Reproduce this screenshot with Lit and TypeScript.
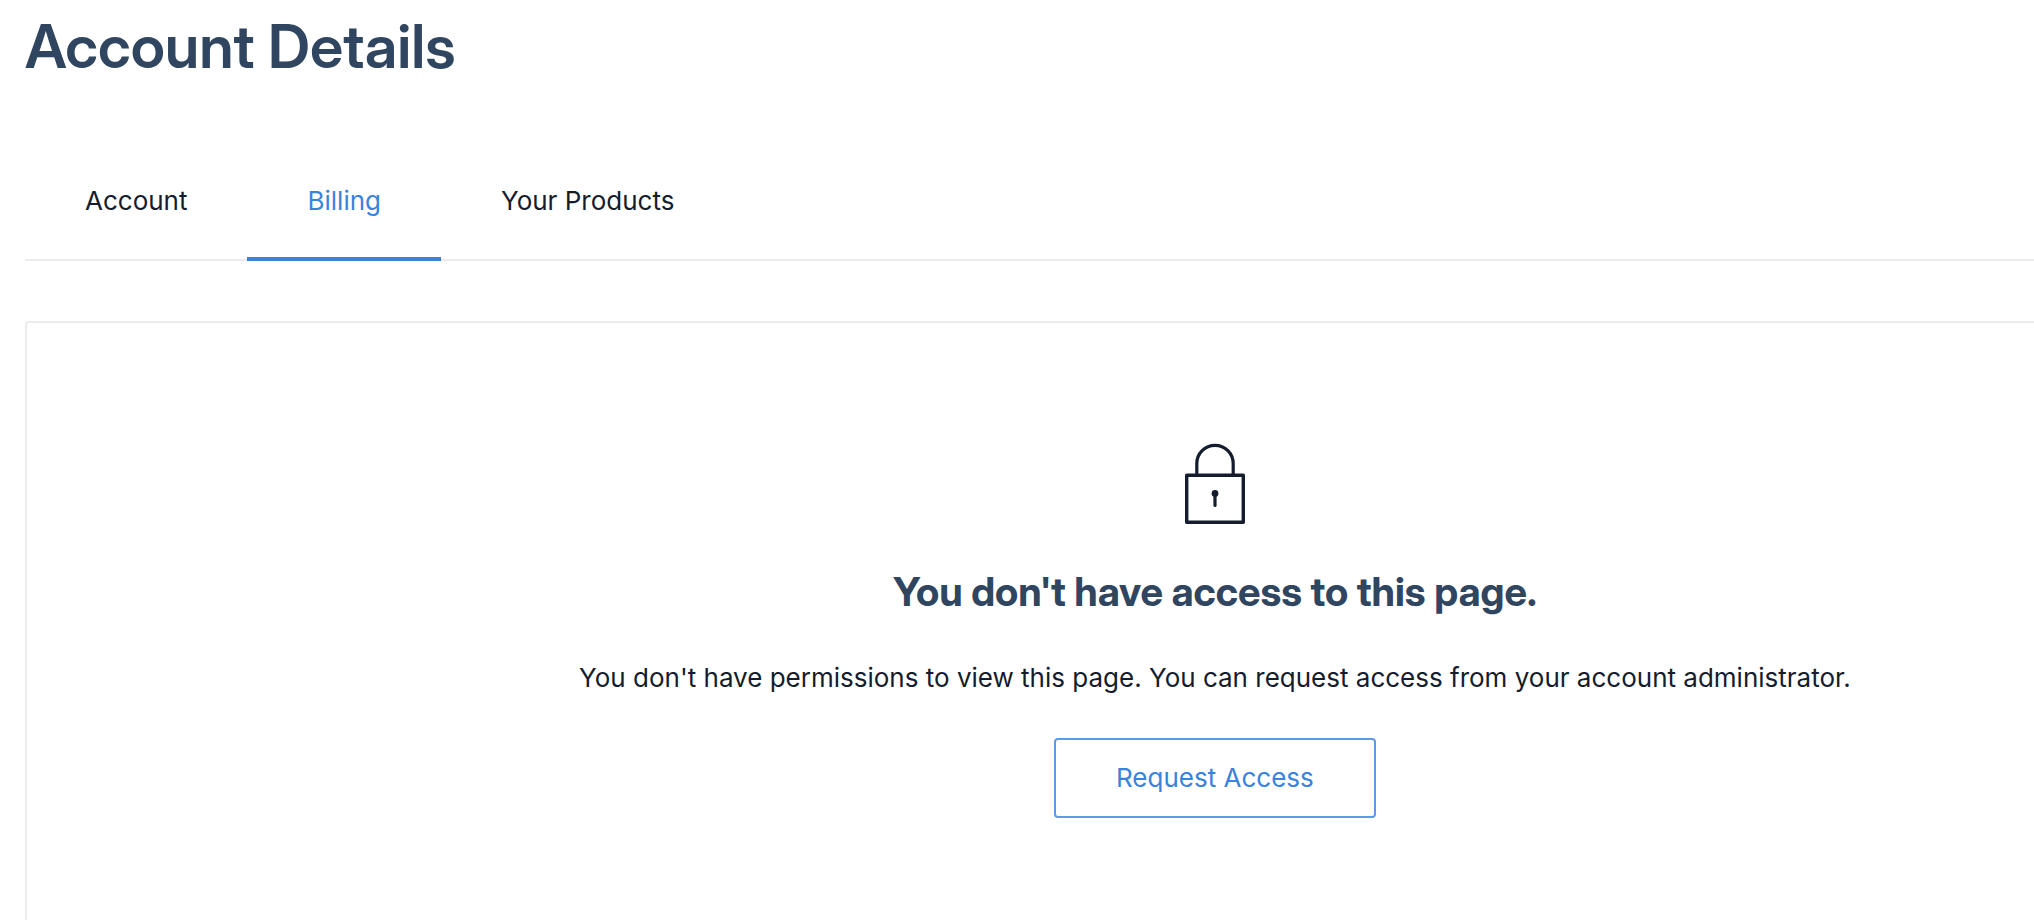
import { LitElement, html, css } from "lit";
import { customElement, state } from "lit/decorators.js";

@customElement("app-root")
export class AppRoot extends LitElement {
  static styles = css`
    :host {
      display: block;
      box-sizing: border-box;
      min-height: 100vh;
      overflow: hidden;
      background: #fff;
      color: #141c2e;
      font-family: Inter, "Liberation Sans", sans-serif;
      font-size: 26px;
      line-height: 40px;
    }
    .page {
      box-sizing: border-box;
      display: flex;
      flex-direction: column;
      width: 117%;
      min-height: 100vh;
      margin-left: 25px;
    }
    .title,
    .heading {
      color: #30455f;
      font-family: "Inter Display", Inter, "Liberation Sans", sans-serif;
      font-variation-settings: "opsz" 32;
    }
    .title {
      margin: 0;
      padding: 6px 0 74px;
      font-size: 60px;
      line-height: 80px;
      font-weight: 600;
    }
    .tabs {
      display: flex;
      border-bottom: 2px solid #ebebf0;
    }
    .tab {
      margin-bottom: -2px;
      padding: 21px 60px 36px;
      border-bottom: 4px solid transparent;
      color: inherit;
      text-decoration: none;
    }
    .tab.active {
      border-color: #3983dd;
      color: #3983dd;
    }
    .card {
      display: flex;
      flex: 1 0 auto;
      flex-direction: column;
      align-items: center;
      margin-top: 60px;
      padding: 120px 60px 80px;
      border: 2px solid #ebebf0;
      border-bottom: 0;
      border-radius: 4px 4px 0 0;
    }
    .lock {
      width: 60px;
      height: 82px;
    }
    .heading {
      margin: 40px 0 0;
      font-size: 40px;
      line-height: 54px;
      font-weight: 700;
    }
    .message {
      margin: 39px 0 40px;
    }
    .request {
      padding: 18px 60px;
      border: 2px solid #5c9be4;
      border-radius: 4px;
      background: #fff;
      color: #3983dd;
      font: inherit;
      cursor: pointer;
    }
  `;

  @state() private active = "Billing";

  private tabs = ["Account", "Billing", "Your Products"];

  private select(event: Event, tab: string) {
    event.preventDefault();
    this.active = tab;
  }

  render() {
    return html`
      <main class="page">
        <h1 class="title">Account Details</h1>
        <nav class="tabs" aria-label="Account sections">
          ${this.tabs.map(
            (tab) => html`<a
              class="tab ${tab === this.active ? "active" : ""}"
              href="#"
              aria-current=${tab === this.active ? "page" : "false"}
              @click=${(e: Event) => this.select(e, tab)}
              >${tab}</a
            >`
          )}
        </nav>
        <section class="card">
          <svg class="lock" viewBox="0 0 60 82" fill="none" stroke="#141c2e" aria-hidden="true">
            <path d="M11.8 32V20.5a18.2 18.2 0 0 1 36.4 0V32" stroke-width="3.2" />
            <rect x="1.7" y="32.2" width="56.6" height="47.1" stroke-width="3.4" stroke-linejoin="round" />
            <circle cx="30" cy="50.5" r="3.4" fill="#141c2e" stroke="none" />
            <path d="M30 51v11.5" stroke-width="3.2" stroke-linecap="round" />
          </svg>
          <h2 class="heading">You don't have access to this page.</h2>
          <p class="message">
            You don't have permissions to view this page. You can request access from your account administrator.
          </p>
          <button class="request" type="button">Request Access</button>
        </section>
      </main>
    `;
  }
}
